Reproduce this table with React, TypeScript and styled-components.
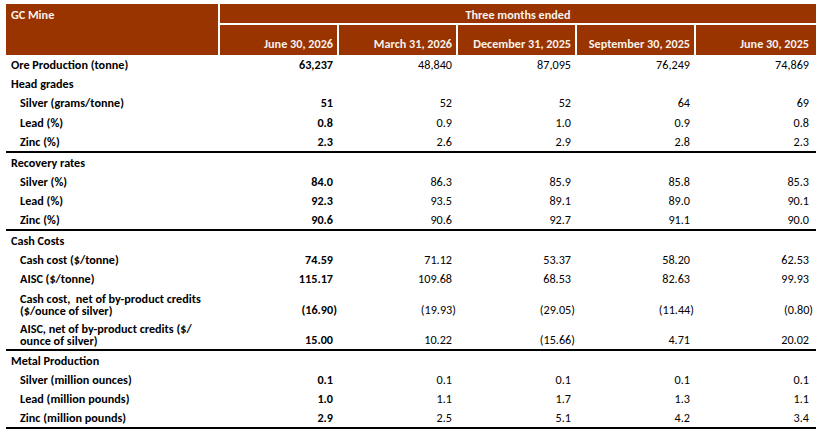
import React from "react";
import styled, { createGlobalStyle } from "styled-components";

const Global = createGlobalStyle`
  html, body { margin: 0; padding: 0; background: #ffffff; }
  body { font-family: Carlito, Calibri, Lato, "Liberation Sans", sans-serif; }
`;

const Page = styled.div`
  padding: 4px 0 0 6px;
`;

const Table = styled.table`
  width: 810px;
  table-layout: fixed;
  border-collapse: separate;
  border-spacing: 0;
  font-size: 12.2px;
  line-height: 14px;
  color: #000000;
`;

const Corner = styled.th`
  background: #993300;
  color: #f7f2ec;
  font-weight: 700;
  text-align: left;
  vertical-align: top;
  padding: 4px 5px 0;
`;

const SpanHead = styled.th`
  background: #993300;
  color: #f7f2ec;
  font-weight: 700;
  text-align: center;
  vertical-align: top;
  padding: 4px 0 0;
  border-left: 2px solid #ffffff;
  border-bottom: 2px solid #ffffff;
`;

const DateHead = styled.th<{ $pr?: number }>`
  background: #993300;
  color: #f7f2ec;
  font-weight: 700;
  text-align: right;
  vertical-align: bottom;
  padding: 0 ${(p) => p.$pr ?? 4}px 4px 0;
  border-left: 2px solid #ffffff;
  white-space: nowrap;
`;

const HeadRow = styled.tr<{ $h: number }>`
  height: ${(p) => p.$h}px;
`;

const Row = styled.tr<{ $h: number; $end?: boolean }>`
  height: ${(p) => p.$h + (p.$end ? 2 : 0)}px;
  & > td {
    border-bottom: ${(p) => (p.$end ? "2px solid #000000" : "0")};
  }
`;

const Label = styled.td<{ $indent?: boolean }>`
  font-weight: 700;
  vertical-align: bottom;
  padding: 0 0 2px ${(p) => (p.$indent ? 14 : 5)}px;
  white-space: nowrap;
`;

const LabelLines = styled.span`
  display: block;
  line-height: 12px;
`;

const Num = styled.td<{ $bold?: boolean; $pr?: number }>`
  font-weight: ${(p) => (p.$bold ? 700 : 400)};
  text-align: right;
  vertical-align: bottom;
  padding: 0 ${(p) => p.$pr ?? 4}px 2px 0;
  white-space: nowrap;
`;

const Neg = styled.span`
  margin-right: -4px;
`;

type Line = {
  label: string | string[];
  indent?: boolean;
  values?: string[];
  h: number;
  end?: boolean;
};

const rows: Line[] = [
  { label: "Ore Production (tonne)", values: ["63,237", "48,840", "87,095", "76,249", "74,869"], h: 19 },
  { label: "Head grades", h: 19 },
  { label: "Silver (grams/tonne)", indent: true, values: ["51", "52", "52", "64", "69"], h: 19 },
  { label: "Lead (%)", indent: true, values: ["0.8", "0.9", "1.0", "0.9", "0.8"], h: 20 },
  { label: "Zinc (%)", indent: true, values: ["2.3", "2.6", "2.9", "2.8", "2.3"], h: 19, end: true },
  { label: "Recovery rates", h: 19 },
  { label: "Silver (%)", indent: true, values: ["84.0", "86.3", "85.9", "85.8", "85.3"], h: 19 },
  { label: "Lead (%)", indent: true, values: ["92.3", "93.5", "89.1", "89.0", "90.1"], h: 19 },
  { label: "Zinc (%)", indent: true, values: ["90.6", "90.6", "92.7", "91.1", "90.0"], h: 19, end: true },
  { label: "Cash Costs", h: 19 },
  { label: "Cash cost ($/tonne)", indent: true, values: ["74.59", "71.12", "53.37", "58.20", "62.53"], h: 19 },
  { label: "AISC ($/tonne)", indent: true, values: ["115.17", "109.68", "68.53", "82.63", "99.93"], h: 19 },
  {
    label: ["Cash cost,\u00a0 net of by-product credits", "($/ounce of silver)"],
    indent: true,
    values: ["(16.90)", "(19.93)", "(29.05)", "(11.44)", "(0.80)"],
    h: 31,
  },
  {
    label: ["AISC, net of by-product credits ($/", "ounce of silver)"],
    indent: true,
    values: ["15.00", "10.22", "(15.66)", "4.71", "20.02"],
    h: 30,
    end: true,
  },
  { label: "Metal Production", h: 19 },
  { label: "Silver (million ounces)", indent: true, values: ["0.1", "0.1", "0.1", "0.1", "0.1"], h: 19 },
  { label: "Lead (million pounds)", indent: true, values: ["1.0", "1.1", "1.7", "1.3", "1.1"], h: 19 },
  { label: "Zinc (million pounds)", indent: true, values: ["2.9", "2.5", "5.1", "4.2", "3.4"], h: 19, end: true },
];

const dates = ["June 30, 2026", "March 31, 2026", "December 31, 2025", "September 30, 2025", "June 30, 2025"];

const renderValue = (v: string) =>
  v.startsWith("(") ? <Neg>{v}</Neg> : v;

export default function App() {
  return (
    <>
      <Global />
      <Page>
        <Table>
          <colgroup>
            <col style={{ width: 212 }} />
            <col style={{ width: 119 }} />
            <col style={{ width: 119 }} />
            <col style={{ width: 119 }} />
            <col style={{ width: 119 }} />
            <col style={{ width: 122 }} />
          </colgroup>
          <thead>
            <HeadRow $h={21}>
              <Corner rowSpan={2}>GC Mine</Corner>
              <SpanHead colSpan={5}>Three months ended</SpanHead>
            </HeadRow>
            <HeadRow $h={30}>
              {dates.map((d, i) => (
                <DateHead key={d + i} $pr={i === 4 ? 7 : 4}>
                  {d}
                </DateHead>
              ))}
            </HeadRow>
          </thead>
          <tbody>
            {rows.map((r, i) => (
              <Row key={i} $h={r.h} $end={r.end}>
                <Label $indent={r.indent}>
                  {Array.isArray(r.label)
                    ? r.label.map((l) => <LabelLines key={l}>{l}</LabelLines>)
                    : r.label}
                </Label>
                {(r.values ?? ["", "", "", "", ""]).map((v, j) => (
                  <Num key={j} $bold={j === 0} $pr={j === 4 ? 7 : 4}>
                    {renderValue(v)}
                  </Num>
                ))}
              </Row>
            ))}
          </tbody>
        </Table>
      </Page>
    </>
  );
}
